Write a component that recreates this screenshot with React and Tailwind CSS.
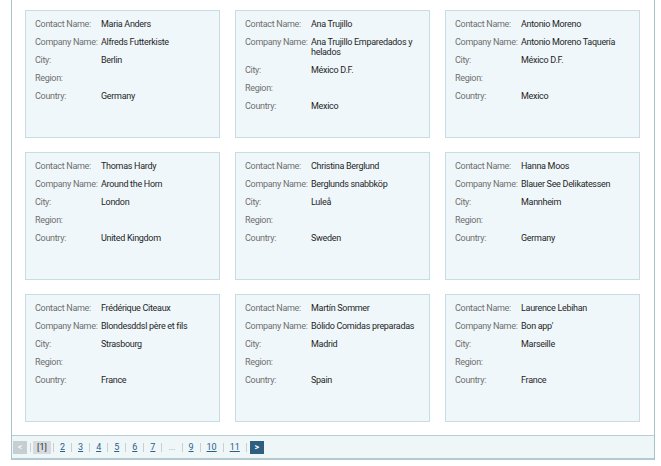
const customers = [
  { contact: 'Maria Anders', company: 'Alfreds Futterkiste', city: 'Berlin', country: 'Germany' },
  { contact: 'Ana Trujillo', company: 'Ana Trujillo Emparedados y helados', city: 'México D.F.', country: 'Mexico' },
  { contact: 'Antonio Moreno', company: 'Antonio Moreno Taquería', city: 'México D.F.', country: 'Mexico' },
  { contact: 'Thomas Hardy', company: 'Around the Horn', city: 'London', country: 'United Kingdom' },
  { contact: 'Christina Berglund', company: 'Berglunds snabbköp', city: 'Luleå', country: 'Sweden' },
  { contact: 'Hanna Moos', company: 'Blauer See Delikatessen', city: 'Mannheim', country: 'Germany' },
  { contact: 'Frédérique Citeaux', company: 'Blondesddsl père et fils', city: 'Strasbourg', country: 'France' },
  { contact: 'Martín Sommer', company: 'Bólido Comidas preparadas', city: 'Madrid', country: 'Spain' },
  { contact: 'Laurence Lebihan', company: "Bon app'", city: 'Marseille', country: 'France' },
]

function Card({ c }) {
  const rows = [
    ['Contact Name:', c.contact],
    ['Company Name:', c.company],
    ['City:', c.city],
    ['Region:', ''],
    ['Country:', c.country],
  ]
  return (
    <div className="h-[128px] border border-[#c7dce3] bg-[#eff7fa] pt-[4px] pl-[9px] pr-[6px]">
      <div className="grid grid-cols-[66px_1fr] tracking-[-0.3px]">
        {rows.map(([label, value]) => (
          <div key={label} className="contents">
            <div className="py-[4px] leading-[10px] text-[#6f6f6f] whitespace-nowrap">{label}</div>
            <div className="py-[4px] leading-[10px] text-[#262626] min-h-[18px]">{value}</div>
          </div>
        ))}
      </div>
    </div>
  )
}

function Sep() {
  return <span className="w-px h-[9px] bg-[#c6cfd3]" />
}

function PageLink({ children }) {
  return <a className="px-[6px] text-[#2b5f89] underline leading-[10px]">{children}</a>
}

export default function App() {
  return (
    <div className="w-[661px] h-[466px] bg-white text-[9px]" style={{ fontFamily: 'Roboto, "Liberation Sans", sans-serif' }}>
      <div className="ml-[11px] w-[644px] border-x border-b-2 border-[#a7c4cb] border-b-[#b3cbd0]">
        <div className="grid grid-cols-[195px_195px_195px] gap-x-[15px] gap-y-[14px] pt-[10px] pl-[13px] pb-[13px]">
          {customers.map(c => <Card key={c.contact} c={c} />)}
        </div>
        <div className="border-t border-[#b9ced4] bg-[#eef6f8] h-[23px] flex items-center pl-[1px]">
          <span className="w-[14px] h-[13px] bg-[#c5ced2] text-white flex items-center justify-center text-[9px] leading-none">&lt;</span>
          <span className="ml-[3px] flex items-center"><Sep /></span>
          <span className="ml-[2px] w-[18px] h-[13px] bg-[#d5dbde] text-[#333] flex items-center justify-center leading-none">[1]</span>
          <span className="ml-[2px] flex items-center"><Sep /></span>
          <div className="flex items-center">
            {['2', '3', '4', '5', '6', '7'].map(p => (
              <div key={p} className="flex items-center">
                <PageLink>{p}</PageLink>
                <Sep />
              </div>
            ))}
            <span className="px-[6px] text-[#8aa0ac] leading-[10px]">...</span>
            <Sep />
            {['9', '10', '11'].map(p => (
              <div key={p} className="flex items-center">
                <PageLink>{p}</PageLink>
                <Sep />
              </div>
            ))}
          </div>
          <span className="ml-[3px] w-[14px] h-[13px] bg-[#2f5f80] text-white flex items-center justify-center text-[9px] font-bold leading-none">&gt;</span>
        </div>
      </div>
    </div>
  )
}
